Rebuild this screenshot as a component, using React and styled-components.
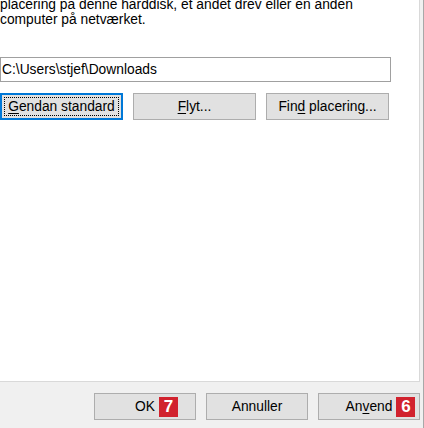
import React from 'react';
import styled, { createGlobalStyle } from 'styled-components';

const GlobalStyle = createGlobalStyle`
  html, body {
    margin: 0;
    padding: 0;
    background: #f0f0f0;
  }
  #root {
    width: 424px;
    height: 428px;
  }
`;

const Window = styled.div`
  width: 424px;
  height: 428px;
  box-sizing: border-box;
  display: flex;
  flex-direction: column;
  background: #f0f0f0;
  border-right: 1px solid #a8a8a8;
  font-family: 'Liberation Sans', Arial, sans-serif;
  font-size: 13.8px;
  color: #000;
  overflow: hidden;
`;

const TabPage = styled.div`
  width: 420px;
  height: 382px;
  box-sizing: border-box;
  background: #fff;
  border-right: 1px solid #d9d9d9;
  border-bottom: 1px solid #d9d9d9;
  overflow: hidden;
  display: flex;
  flex-direction: column;
`;

const Description = styled.p`
  margin: -3px 0 0 0;
  line-height: 15px;
  white-space: nowrap;
`;

const PathField = styled.input`
  margin-top: 30px;
  width: 391px;
  height: 25px;
  box-sizing: border-box;
  border: 1px solid #a0a0a0;
  padding: 0 1px;
  font-family: inherit;
  font-size: 13.8px;
  color: #000;
  background: #fff;
  outline: none;
`;

const ButtonRow = styled.div`
  display: flex;
  gap: 10px;
  margin-top: 11px;
`;

const Button = styled.button`
  position: relative;
  width: ${({ w }) => w || 123}px;
  height: 27px;
  box-sizing: border-box;
  background: #e1e1e1;
  border: 1px solid ${({ focused }) => (focused ? '#0078d7' : '#adadad')};
  box-shadow: ${({ focused }) => (focused ? 'inset 0 0 0 1px #0078d7' : 'none')};
  font-family: inherit;
  font-size: 13.8px;
  color: #000;
  padding: 0;
  display: flex;
  align-items: center;
  justify-content: center;
  &::after {
    content: '';
    display: ${({ focused }) => (focused ? 'block' : 'none')};
    position: absolute;
    inset: 3px;
    border: 1px dotted #000;
  }
`;

const Label = styled.span`
  position: relative;
`;

const Key = styled.span`
  text-decoration: underline;
  text-underline-offset: 2px;
`;

const Footer = styled.div`
  flex: 1;
  display: flex;
  justify-content: flex-end;
  align-items: flex-start;
  gap: 10px;
  padding: 11px 3px 0 0;
`;

// red step number laid over the button, just right of its caption
const Badge = styled.span`
  position: absolute;
  left: calc(100% + 4px);
  top: 50%;
  transform: translateY(-50%);
  width: 19px;
  height: 20px;
  background: #d1222e;
  color: #fff;
  font-weight: bold;
  font-size: 17px;
  display: flex;
  align-items: center;
  justify-content: center;
  line-height: 1;
`;

export default function App() {
  return (
    <>
      <GlobalStyle />
      <Window>
        <TabPage>
          <Description>
            placering på denne harddisk, et andet drev eller en anden
            <br />
            computer på netværket.
          </Description>
          <PathField defaultValue="C:\Users\stjef\Downloads" readOnly />
          <ButtonRow>
            <Button focused>
              <Label><Key>G</Key>endan standard</Label>
            </Button>
            <Button>
              <Label><Key>F</Key>lyt...</Label>
            </Button>
            <Button>
              <Label>Fin<Key>d</Key> placering...</Label>
            </Button>
          </ButtonRow>
        </TabPage>
        <Footer>
          <Button w={102}>
            <Label>
              OK
              <Badge>7</Badge>
            </Label>
          </Button>
          <Button w={102}>
            <Label>Annuller</Label>
          </Button>
          <Button w={102}>
            <Label>
              An<Key>v</Key>end
              <Badge>6</Badge>
            </Label>
          </Button>
        </Footer>
      </Window>
    </>
  );
}
